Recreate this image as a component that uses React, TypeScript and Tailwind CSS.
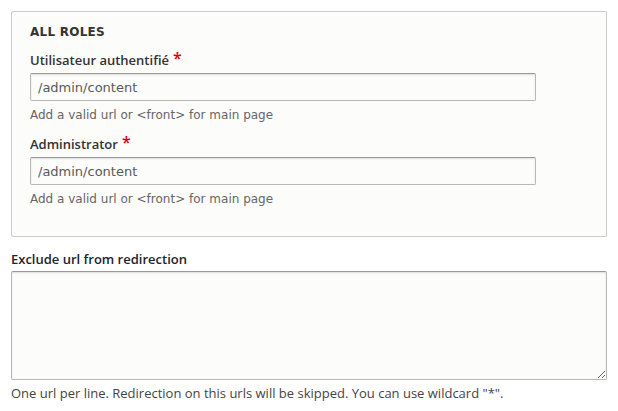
import React from "react";

type RoleFieldProps = {
  label: string;
  value: string;
  first?: boolean;
};

function RoleField({ label, value, first }: Readonly<RoleFieldProps>) {
  return (
    <div className={first ? "mt-[11px]" : "mt-[12px]"}>
      <label className="block font-['Open_Sans'] text-[13px] leading-[18px] font-semibold text-[#333]">
        {label}
        <span className="ml-[4px] align-top text-[16px] leading-[14px] text-[#e00000]">*</span>
      </label>
      <input
        type="text"
        defaultValue={value}
        className="mt-[4px] block h-[28px] w-[506px] rounded-[2px] border border-[#b8b8b8] border-t-[#999] bg-[#fcfcfa] px-[7px] font-['DejaVu_Sans'] text-[13px] text-[#595959] shadow-[inset_0_1px_2px_rgba(0,0,0,0.125)] outline-none"
      />
      <p className="mt-[6px] font-['DejaVu_Sans'] text-[12px] leading-[16px] text-[#666]">
        Add a valid url or &lt;front&gt; for main page
      </p>
    </div>
  );
}

export default function App() {
  return (
    <div className="min-h-screen bg-white px-[11px] pt-[11px] font-['DejaVu_Sans',sans-serif]">
      <div className="rounded-[2px] border border-[#ccc] bg-[#fcfcfa] pb-[29px] pl-[18px] pt-[12px]">
        <div className="font-['DejaVu_Sans'] text-[12px] leading-[16px] font-bold uppercase tracking-[0.02em] text-[#333]">
          All roles
        </div>
        <RoleField label="Utilisateur authentifié" value="/admin/content" first />
        <RoleField label="Administrator" value="/admin/content" />
      </div>

      <label className="mt-[13px] block font-['Open_Sans'] text-[13px] leading-[18px] font-semibold text-[#222330]">
        Exclude url from redirection
      </label>
      <textarea className="mt-[3px] block h-[109px] w-full rounded-[2px] border border-[#b8b8b8] border-t-[#999] bg-[#fcfcfa] shadow-[inset_0_1px_2px_rgba(0,0,0,0.125)] outline-none" />
      <p className="mt-[5px] font-['Open_Sans'] text-[13px] leading-[17px] text-[#444]">
        One url per line. Redirection on this urls will be skipped. You can use wildcard "*".
      </p>
    </div>
  );
}
